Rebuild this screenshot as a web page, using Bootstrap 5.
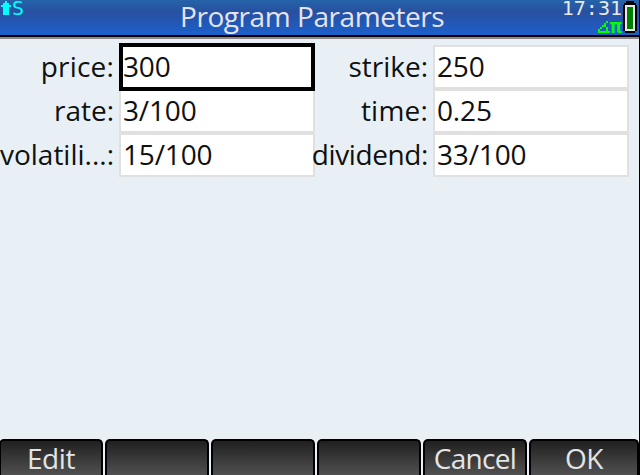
<!DOCTYPE html>
<html lang="en">
<head>
<meta charset="utf-8">
<meta name="viewport" content="width=device-width, initial-scale=1">
<title>Program Parameters</title>
<link href="https://cdn.jsdelivr.net/npm/bootstrap@5.3.0/dist/css/bootstrap.min.css" rel="stylesheet">
<style>
html,body{height:475px}
body{background:#e8f0f6;font:28px/44px "Open Sans","Noto Sans",sans-serif;color:#101010;border-right:1px solid #000}
.titlebar{height:39px;margin-right:-1px;background:linear-gradient(#2464a8 0,#2850a0 12px,#1c60cc 35px);border-bottom:2px solid #8c888c;color:#e4e4ec}
.titlebar::after{content:"";position:absolute;left:0;right:0;bottom:0;height:2px;background:#000}
.title-text{line-height:33px;letter-spacing:-.44px;white-space:nowrap;padding-left:156px}
.tiny{font:20px/18px "DejaVu Sans Mono",monospace}
.status-left{width:24px;color:#0ff;margin-top:-1px}
.status-left svg{margin-top:1px}
.clock{color:#e8e8e8;margin-top:-1px}
.mode{color:#0f0;font-weight:bold;height:18px}
.mode svg{margin-top:4px}
.params{display:grid;grid-template-columns:119px 196px 118px 196px;grid-auto-rows:44px;padding-top:6px}
.params label{padding-right:5px;white-space:nowrap;display:flex;justify-content:flex-end;line-height:42px}
.params label span{flex:none}
.tight{letter-spacing:-.4px}
.loose{letter-spacing:.2px}
.field{background:#fff;border:2px solid #e0e0e0;line-height:38px;padding-left:2px;letter-spacing:-.15px}
.field.active{border:4px solid #000;margin:-2px 0;padding-left:0;position:relative;z-index:1}
.softkeys{height:36px;display:grid;grid-template-columns:104px repeat(4,104px) 110px;column-gap:2px;margin-left:-1px}
.softkey{border:2px solid #000;border-bottom:0;border-radius:5px 5px 0 0;background:linear-gradient(#202020,#505050);color:#e4e4e4;line-height:34px;height:36px;padding:0;text-align:center;font-size:28px;letter-spacing:-.4px}
.cancel{letter-spacing:-.7px}
</style>
<script src="https://cdn.jsdelivr.net/npm/bootstrap@5.3.0/dist/js/bootstrap.bundle.min.js"></script>
</head>
<body class="d-flex flex-column overflow-hidden">
<header class="titlebar position-relative flex-shrink-0 d-flex">
  <div class="d-flex tiny status-left"><svg width="12" height="16" viewBox="0 0 12 16" shape-rendering="crispEdges"><path fill="#0ff" d="M5 1h2v2h2v2h2v2H9v8H3V7H1V5h2V3h2z"/></svg><span>S</span></div>
  <div class="title-text">Program Parameters</div>
  <div class="d-flex ms-auto">
    <div class="d-flex flex-column align-items-end tiny">
      <span class="clock">17:31</span>
      <span class="d-flex mode"><svg width="12" height="12" viewBox="0 0 12 12" shape-rendering="crispEdges"><path fill="#0f0" d="M8 0h2v2H8zM6 2h2v2H6zM4 4h4v2H4zM2 6h2v2H2zM8 6h2v4H8zM0 8h2v2H0zM0 10h12v2H0z"/></svg><span>π</span></span>
    </div>
    <svg width="18" height="35" viewBox="0 0 18 35" shape-rendering="crispEdges"><path d="M4 1h8v2h2v2h1v26h-2v2H3v-2H1V5h1V3h2z"/><path fill="#e8e8e8" d="M3 5h10v26H3z"/><path fill="#008000" d="M5 7h6v22H5z"/></svg>
  </div>
</header>
<main class="params flex-grow-1">
  <label><span class="loose">price:</span></label><div class="field active">300</div>
  <label><span>strike:</span></label><div class="field">250</div>
  <label><span>rate:</span></label><div class="field">3/100</div>
  <label><span class="loose">time:</span></label><div class="field">0.25</div>
  <label><span>volatili...:</span></label><div class="field">15/100</div>
  <label><span class="tight">dividend:</span></label><div class="field">33/100</div>
</main>
<footer class="softkeys flex-shrink-0">
  <button class="softkey">Edit</button><button class="softkey"></button><button class="softkey"></button><button class="softkey"></button><button class="softkey cancel">Cancel</button><button class="softkey">OK</button>
</footer>
</body>
</html>
